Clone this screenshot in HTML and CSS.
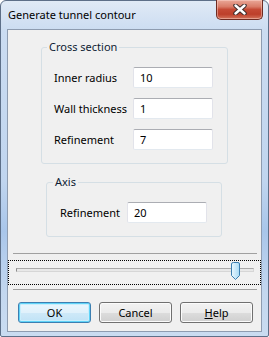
FILE: index.html
```html
<!DOCTYPE html>
<html>
<head>
<meta charset="utf-8">
<link rel="stylesheet" href="styles.css">
</head>
<body>
<div class="window">
  <div class="titlebar">
    <span class="title">Generate tunnel contour</span>
    <div class="close">
      <svg width="14" height="11" viewBox="0 0 14 11">
        <path d="M2.5 1.5 L11.5 9.5 M11.5 1.5 L2.5 9.5" stroke="#3a2a2a" stroke-width="4.4" stroke-linecap="round"/>
        <path d="M2.5 1.5 L11.5 9.5 M11.5 1.5 L2.5 9.5" stroke="#ffffff" stroke-width="2.4" stroke-linecap="round"/>
      </svg>
    </div>
  </div>
  <div class="client">
    <div class="group cross">
      <span class="legend">Cross section</span>
      <div class="row"><span class="label">Inner radius</span><input class="field" value="10"></div>
      <div class="row"><span class="label">Wall thickness</span><input class="field" value="1"></div>
      <div class="row"><span class="label">Refinement</span><input class="field" value="7"></div>
    </div>
    <div class="group axis">
      <span class="legend">Axis</span>
      <div class="row"><span class="label">Refinement</span><input class="field" value="20"></div>
    </div>
    <div class="sep sep1"></div>
    <div class="slider">
      <div class="track"></div>
      <svg class="thumb" width="10" height="19" viewBox="0 0 10 19">
        <defs>
          <linearGradient id="tg" x1="0" y1="0" x2="1" y2="0">
            <stop offset="0" stop-color="#eaf7fe"/>
            <stop offset="1" stop-color="#a8daf5"/>
          </linearGradient>
        </defs>
        <path d="M2.5 0.5 H7 Q8.5 0.5 8.5 2 V13.5 L4.5 17.5 L0.5 13.5 V2 Q0.5 0.5 2.5 0.5 Z" fill="url(#tg)" stroke="#3c7fb1" stroke-width="1"/>
      </svg>
    </div>
    <div class="sep sep2"></div>
    <div class="buttons">
      <button class="btn default">OK</button>
      <button class="btn">Cancel</button>
      <button class="btn"><u>H</u>elp</button>
    </div>
  </div>
</div>
</body>
</html>
```
FILE: styles.css
```css
html, body {
  margin: 0;
  padding: 0;
  background: #ffffff;
}
body {
  font-family: "Noto Sans", "Liberation Sans", sans-serif;
  font-size: 11px;
  color: #000;
}
.window {
  box-sizing: border-box;
  width: 269px;
  height: 337px;
  border: 1px solid #5d6f88;
  border-radius: 6px 6px 2px 2px;
  background: linear-gradient(#e0eaf6 0px, #cbdcf1 30px, #c0d5ef 180px, #a9c6ea 230px, #c3d7ef 290px, #cadcf1 337px);
  display: flex;
  flex-direction: column;
  padding: 0 6px 4px 6px;
}
.titlebar {
  height: 28px;
  display: flex;
  align-items: flex-start;
  justify-content: space-between;
}
.title {
  margin-top: 6px;
  padding-left: 1px;
  line-height: 15px;
  font-size: 11px;
  color: #000;
}
.close {
  box-sizing: border-box;
  width: 47px;
  height: 20px;
  margin-top: -1px;
  margin-right: -1px;
  border: 1px solid #6e2b22;
  border-top: none;
  border-radius: 0 0 5px 5px;
  background: linear-gradient(#eaa898 0%, #d97c68 35%, #c54a35 50%, #bd3f2a 75%, #d3735b 100%);
  box-shadow: inset 0 0 0 1px rgba(255,220,210,0.45);
  display: flex;
  align-items: center;
  justify-content: center;
}
.client {
  box-sizing: border-box;
  flex: 1;
  border: 1px solid #8e9cb0;
  background: #f0f0f0;
  display: flex;
  flex-direction: column;
  align-items: flex-start;
}
.group {
  position: relative;
  box-sizing: border-box;
  border: 1px solid #d5dfe5;
  border-radius: 3px;
  display: flex;
  flex-direction: column;
  gap: 10px;
  padding-top: 19px;
  padding-bottom: 13px;
}
.cross {
  margin-top: 17px;
  margin-left: 33px;
  width: 187px;
  height: 117px;
  padding-left: 12px;
}
.axis {
  margin-top: 18px;
  margin-left: 38px;
  width: 176px;
  height: 55px;
  padding-left: 13px;
}
.legend {
  position: absolute;
  top: -9px;
  left: 5px;
  padding: 0 2px;
  line-height: 15px;
  background: #f0f0f0;
  color: #0e1c33;
}
.axis .legend {
  left: 6px;
}
.row {
  display: flex;
  align-items: center;
  height: 21px;
}
.label {
  line-height: 15px;
  color: #000;
}
.cross .label {
  width: 79px;
}
.axis .label {
  width: 67px;
}
.field {
  box-sizing: border-box;
  width: 80px;
  height: 21px;
  margin: 0;
  padding: 0 0 0 6px;
  border: 1px solid #e2e3ea;
  border-top-color: #abadb3;
  border-bottom-color: #e3e9ef;
  border-radius: 2px;
  background: #fff;
  font-family: "Noto Sans", "Liberation Sans", sans-serif;
  font-size: 11px;
  color: #000;
  outline: none;
}
.sep {
  height: 0;
  border-top: 1px solid #a0a0a0;
  margin-left: 5px;
  width: 244px;
}
.sep1 {
  margin-top: 16px;
}
.slider {
  position: relative;
  box-sizing: border-box;
  margin-top: 6px;
  width: 253px;
  height: 25px;
  border: 1px dotted #000;
}
.track {
  box-sizing: border-box;
  margin-left: 7px;
  margin-top: 7px;
  width: 238px;
  height: 4px;
  border: 1px solid #d6d6d6;
  border-top-color: #a9a9a9;
  border-left-color: #8c8c8c;
  background: #e8e8e8;
}
.thumb {
  position: absolute;
  left: 222px;
  top: 1px;
}
.sep2 {
  margin-top: 4px;
}
.buttons {
  display: flex;
  gap: 8px;
  margin-top: 12px;
  margin-left: 10px;
}
.btn {
  box-sizing: border-box;
  width: 73px;
  height: 21px;
  margin: 0;
  padding: 0;
  border: 1px solid #707070;
  border-radius: 3px;
  background: linear-gradient(#f2f2f2 0%, #ebebeb 50%, #dddddd 50%, #cfcfcf 100%);
  box-shadow: inset 0 0 0 1px #fbfbfb;
  font-family: "Noto Sans", "Liberation Sans", sans-serif;
  font-size: 11px;
  line-height: 15px;
  color: #000;
}
.btn.default {
  border-color: #3c7fb1;
  box-shadow: inset 0 0 0 1px #5fd3f8, inset 0 0 0 2px #c9eefc;
  background: linear-gradient(#eaf6fd 0%, #e0f1fb 50%, #cfe9f8 50%, #bfe2f6 100%);
}
.btn u {
  text-decoration: underline;
}
```
